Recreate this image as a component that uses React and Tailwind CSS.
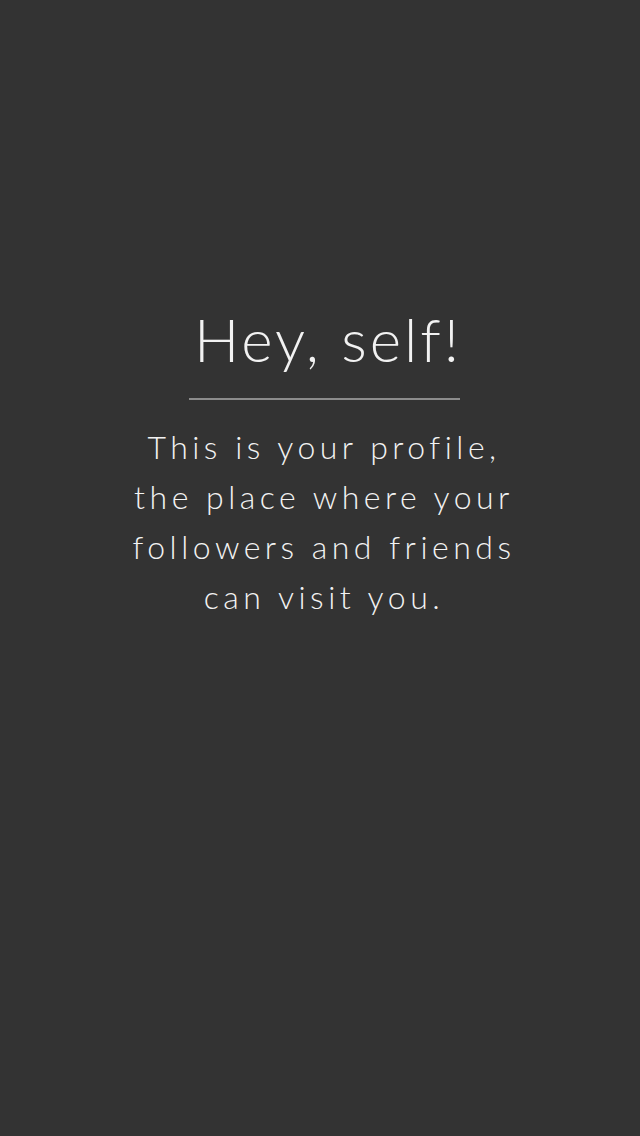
import React from "react";

export default function App() {
  return (
    <div className="min-h-[1136px] w-full bg-[#333333] flex flex-col items-center pt-[300px] pl-[8px] font-['Lato',sans-serif] text-[#f2f2f2]">
      <h1 className="text-[60px] leading-[78px] font-light tracking-[3px] ml-[8px]">Hey, self!</h1>
      <div className="w-[271px] h-[2px] bg-[#8c8c8c] mt-[20px] mb-[22px]" />
      <p className="text-[32px] leading-[50px] font-light tracking-[4.5px] text-center w-[460px]">
        This is your profile,
        <br />
        the place where your
        <br />
        followers and friends
        <br />
        can visit you.
      </p>
    </div>
  );
}
